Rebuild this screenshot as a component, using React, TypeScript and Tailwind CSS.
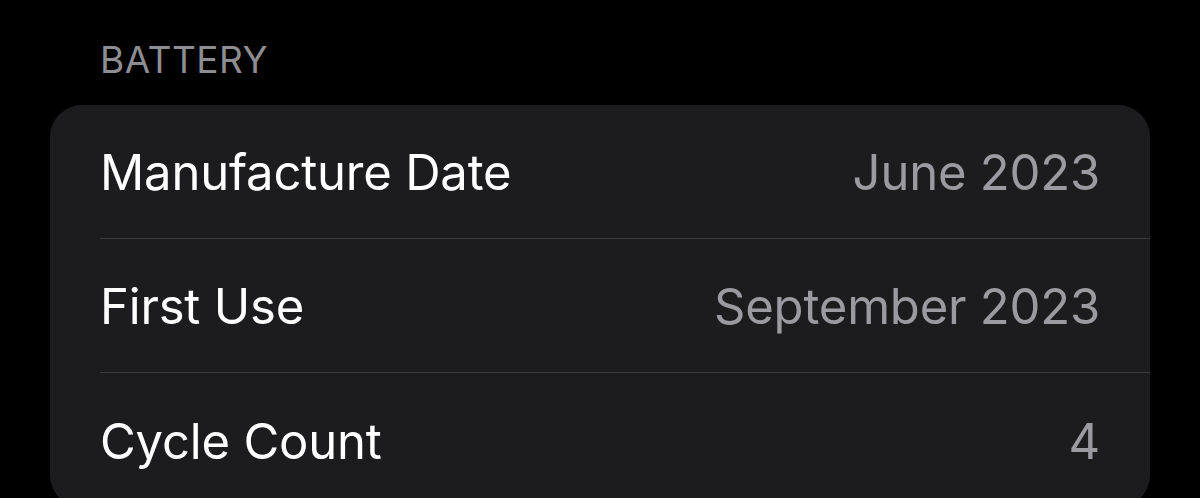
import React from "react";

const rows = [
  { label: "Manufacture Date", value: "June 2023" },
  { label: "First Use", value: "September 2023" },
  { label: "Cycle Count", value: "4" },
];

export default function App() {
  return (
    <div className="w-[1200px] h-[498px] overflow-hidden bg-black px-[50px] pt-[38px]" style={{ fontFamily: "Inter, 'Noto Sans', sans-serif" }}>
      <div className="pl-[50px] text-[37px] leading-[44px] text-[#8d8d92] tracking-[0.5px]">BATTERY</div>
      <div className="mt-[23px] rounded-[32px] bg-[#1c1c1e]">
        {rows.map((row, i) => (
          <div key={row.label} className="pl-[50px]">
            <div
              className={`flex items-center justify-between pr-[50px] pt-[3px] h-[134px] ${
                i < rows.length - 1 ? "border-b border-[#3a3a3c]" : ""
              }`}
            >
              <span className="text-[49px] tracking-[-0.2px] text-white">{row.label}</span>
              <span className="text-[49px] tracking-[-0.2px] text-[#9a9aa0]">{row.value}</span>
            </div>
          </div>
        ))}
      </div>
    </div>
  );
}
